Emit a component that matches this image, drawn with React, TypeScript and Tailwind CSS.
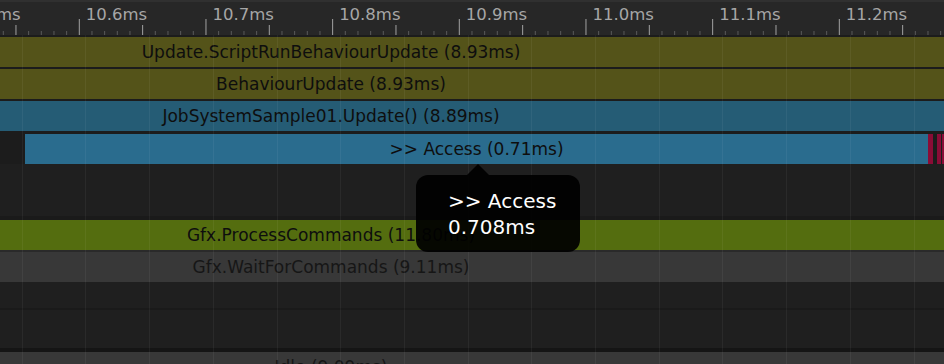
import React from "react";

const font = { fontFamily: '"DejaVu Sans", "Liberation Sans", sans-serif' };

const MAJOR = 126.67;
const FIRST_MAJOR = 79.3;
const labels = ["10.5ms", "10.6ms", "10.7ms", "10.8ms", "10.9ms", "11.0ms", "11.1ms", "11.2ms", "11.3ms"];

const Ruler: React.FC = () => {
    const minors: number[] = [];
    for (let i = -10; i < 80; i++) minors.push(FIRST_MAJOR - MAJOR + i * (MAJOR / 10));
    return (
        <div className="relative h-[35px] bg-[#272727] border-t-2 border-[#303030]">
            <svg className="absolute inset-0" width={944} height={33}>
                {minors.map((x, i) => {
                    const step = ((i % 10) + 10) % 10;
                    const major = step === 0;
                    const mid = step === 5;
                    const y1 = major ? 17 : mid ? 23 : 29;
                    return (
                        <line
                            key={i}
                            x1={x}
                            x2={x}
                            y1={y1}
                            y2={33}
                            stroke={major || mid ? "#a2a2a2" : "#5a5a5a"}
                            strokeWidth={1}
                        />
                    );
                })}
            </svg>
            {labels.map((l, i) => (
                <span
                    key={l}
                    className="absolute top-[3px] text-[16.5px] leading-[20px] text-[#a6a6a6] whitespace-nowrap"
                    style={{ ...font, left: FIRST_MAJOR - MAJOR + i * MAJOR + 6.5 }}
                >
                    {l}
                </span>
            ))}
        </div>
    );
};

const Bar: React.FC<{ color: string; text?: string; textColor?: string }> = ({ color, text, textColor = "text-[#0e0e0e]" }) => (
    <div className={`h-[30px] w-full ${color}`}>
        {text && (
            <div className={`w-[662px] text-center text-[17px] leading-[30px] whitespace-nowrap ${textColor}`} style={font}>
                {text}
            </div>
        )}
    </div>
);

export default function App() {
    const grid = Array.from({ length: 15 }, (_, k) => 21.7 + 63.7 * k);
    return (
        <div className="relative w-[944px] h-[364px] overflow-hidden bg-[#1f1f1f]">
            <Ruler />
            <div className="flex flex-col">
                <div className="h-[2px] bg-[#1c1c1c]" />
                <Bar color="bg-[#545319]" text="Update.ScriptRunBehaviourUpdate (8.93ms)" />
                <div className="h-[2px] bg-[#1c1c1c]" />
                <Bar color="bg-[#545319]" text="BehaviourUpdate (8.93ms)" />
                <div className="h-[2px] bg-[#1c1c1c]" />
                <Bar color="bg-[#255c75]" text="JobSystemSample01.Update() (8.89ms)" />
                <div className="h-[3px] bg-[#1c1c1c]" />
                <div className="flex h-[30px] bg-[#1c1c1c]">
                    <div className="w-[25px]" />
                    <div
                        className="w-[903px] bg-[#2a6c8e] text-center text-[17px] leading-[30px] text-[#0e0e0e] whitespace-nowrap"
                        style={font}
                    >
                        &gt;&gt; Access (0.71ms)
                    </div>
                    <div className="w-[5px] bg-[#8a0c36]" />
                    <div className="w-[4px]" />
                    <div className="w-[4px] bg-[#8a0c36]" />
                    <div className="w-[1px]" />
                    <div className="w-[2px] bg-[#8a0c36]" />
                </div>
                <div className="h-[52px]" />
                <div className="h-[4px] bg-[#1a1a1a]" />
                <Bar color="bg-[#546d0f]" text="Gfx.ProcessCommands (11.80ms)" />
                <div className="h-[2px] bg-[#2a2a2a]" />
                <Bar color="bg-[#383838]" text="Gfx.WaitForCommands (9.11ms)" textColor="text-[#161616]" />
                <div className="h-[26px]" />
                <div className="h-[2px] bg-[#1a1a1a]" />
                <div className="h-[38px]" />
                <div className="h-[4px] bg-[#151515]" />
                <Bar color="bg-[#383838]" text="Idle (9.09ms)" textColor="text-[#161616]" />
            </div>

            {grid.map((x) => (
                <div key={x} className="absolute top-[35px] bottom-0 w-px bg-white/[0.05]" style={{ left: x }} />
            ))}

            <div className="absolute left-[416px] top-[164px]">
                <svg className="ml-[51px] block" width={22} height={11} viewBox="0 0 22 11">
                    <path d="M0 11 L11 0 L22 11 Z" fill="rgba(0,0,0,0.92)" />
                </svg>
                <div className="w-[164px] h-[77px] rounded-[12px] bg-black/[0.92] pl-[32px] pt-[13px] text-white text-[20px] leading-[26px]" style={font}>
                    <div>&gt;&gt; Access</div>
                    <div>0.708ms</div>
                </div>
            </div>
        </div>
    );
}
